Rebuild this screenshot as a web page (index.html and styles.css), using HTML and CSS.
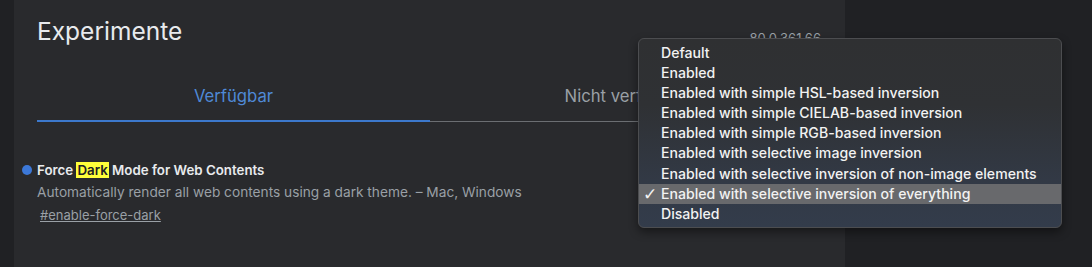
FILE: index.html
```html
<!DOCTYPE html>
<html lang="de">
<head>
<meta charset="utf-8">
<title>Experimente</title>
<link rel="stylesheet" href="styles.css">
</head>
<body>
<div class="page">
  <main class="card">
    <header class="header">
      <h1 class="title">Experimente</h1>
      <span class="version">80.0.361.66</span>
    </header>
    <nav class="tabs">
      <div class="tab tab-active">Verfügbar</div>
      <div class="tab">Nicht verfügbar</div>
    </nav>
    <section class="experiment">
      <div class="exp-title"><span class="dot"></span>Force <mark class="hl">Dark</mark> Mode for Web Contents</div>
      <div class="exp-desc">Automatically render all web contents using a dark theme. – Mac, Windows</div>
      <a class="exp-link" href="#enable-force-dark">#enable-force-dark</a>
    </section>
  </main>
</div>
<ul class="menu">
  <li class="item">Default</li>
  <li class="item">Enabled</li>
  <li class="item">Enabled with simple HSL-based inversion</li>
  <li class="item">Enabled with simple CIELAB-based inversion</li>
  <li class="item">Enabled with simple RGB-based inversion</li>
  <li class="item">Enabled with selective image inversion</li>
  <li class="item">Enabled with selective inversion of non-image elements</li>
  <li class="item item-selected"><span class="check">✓</span>Enabled with selective inversion of everything</li>
  <li class="item">Disabled</li>
</ul>
</body>
</html>
```
FILE: styles.css
```css
html, body {
  margin: 0;
  padding: 0;
  height: 100%;
  overflow: hidden;
}
body {
  background: #202124;
  font-family: Inter, Roboto, "Liberation Sans", sans-serif;
}
.page {
  display: flex;
  padding-left: 14px;
  height: 100%;
}
.card {
  width: 831px;
  background: #292a2d;
  padding: 0 22px 0 23px;
  box-sizing: border-box;
}
.header {
  display: flex;
  justify-content: space-between;
  align-items: flex-start;
  height: 70px;
}
.title {
  margin: 15px 0 0 0;
  font-size: 24.5px;
  line-height: 32px;
  font-weight: 400;
  color: #e8eaed;
}
.version {
  margin-top: 30px;
  margin-right: 2px;
  font-size: 13px;
  line-height: 16px;
  color: #9aa0a6;
}
.tabs {
  display: flex;
  height: 52px;
}
.tab {
  flex: 0 0 393px;
  display: flex;
  align-items: center;
  justify-content: center;
  font-size: 16.7px;
  color: #9aa0a6;
  border-bottom: 1px solid #6b6e72;
  box-sizing: border-box;
  padding-top: 1px;
}
.tab-active {
  color: #4f89d6;
  border-bottom: 2px solid #3c78cc;
  padding-top: 2px;
}
.experiment {
  padding-top: 39px;
  display: flex;
  flex-direction: column;
}
.exp-title {
  position: relative;
  font-size: 13.3px;
  line-height: 18px;
  font-weight: 600;
  color: #e8eaed;
}
.dot {
  position: absolute;
  left: -15px;
  top: 4px;
  width: 10px;
  height: 10px;
  border-radius: 50%;
  background: #3c78d8;
}
.hl {
  background: #ffff3a;
  color: #202124;
  padding: 0 1px;
}
.exp-desc {
  margin-top: 4px;
  font-size: 13.7px;
  line-height: 18px;
  color: #9aa0a6;
}
.exp-link {
  margin-top: 5px;
  margin-left: 3px;
  align-self: flex-start;
  font-size: 13px;
  line-height: 18px;
  color: #9aa0a6;
  text-decoration: underline;
}
.menu {
  position: absolute;
  left: 638px;
  top: 38px;
  width: 424px;
  height: 190px;
  margin: 0;
  padding: 4px 0 0 0;
  box-sizing: border-box;
  list-style: none;
  border-radius: 6px;
  border: 1px solid #4c4d50;
  background: linear-gradient(to bottom, #2f3032 0%, #2f3134 35%, #323945 75%, #333c4b 100%);
  box-shadow: 0 4px 10px rgba(0, 0, 0, 0.45);
  font-family: Inter, "Liberation Sans", Arial, sans-serif;
}
.item {
  position: relative;
  height: 20.1px;
  line-height: 20px;
  padding-left: 22px;
  font-size: 14.1px;
  font-weight: 500;
  color: #f2f2f2;
  white-space: nowrap;
}
.item-selected {
  background: #68696c;
}
.check {
  position: absolute;
  left: 4px;
  top: 0;
  font-size: 17px;
  font-family: "DejaVu Sans", sans-serif;
  font-weight: 400;
}
```
